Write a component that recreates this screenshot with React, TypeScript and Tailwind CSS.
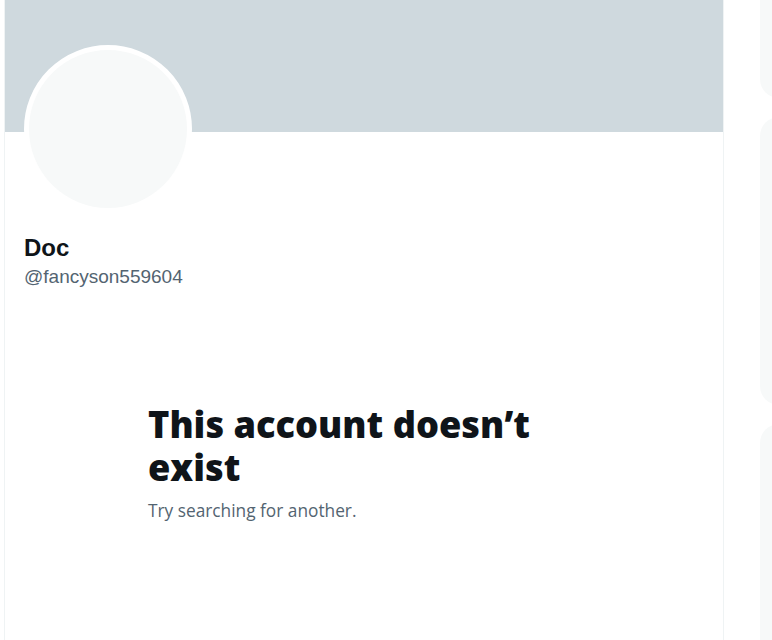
import React from "react";

export default function App() {
  return (
    <div className="flex h-[640px] w-[772px] overflow-hidden bg-white">
      <div className="w-[4px] shrink-0" />
      <main className="flex w-[720px] shrink-0 flex-col border-x border-[#eff3f4]">
        <div className="h-[132px] shrink-0 bg-[#cfd9de]" />
        <div className="px-[19px]">
          <div className="-mt-[87px] h-[168px] w-[168px] rounded-full border-[5px] border-white bg-[#f7f9f9]" />
          <div className="mt-[20px] font-['Liberation_Sans',Arial,sans-serif]">
            <div className="text-[24px] font-bold leading-[29px] text-[#0f1419]">Doc</div>
            <div className="mt-[3px] text-[19px] leading-[24px] text-[#536471]">@fancyson559604</div>
          </div>
        </div>
        <div className="mt-[114px] pl-[143px] font-['Open_Sans','Noto_Sans',sans-serif]">
          <h2 className="text-[36.2px] font-extrabold leading-[43px] text-[#0f1419]">
            This account doesn’t
            <br />
            exist
          </h2>
          <p className="mt-[10px] text-[17.3px] leading-[24px] text-[#536471]">Try searching for another.</p>
        </div>
      </main>
      <div className="w-[36px] shrink-0" />
      <aside className="flex w-[300px] shrink-0 flex-col gap-[19px]">
        <div className="-mt-[40px] h-[138px] shrink-0 rounded-[19px] bg-[#f7f9f9]" />
        <div className="h-[288px] shrink-0 rounded-[19px] bg-[#f7f9f9]" />
        <div className="h-[300px] shrink-0 rounded-[19px] bg-[#f7f9f9]" />
      </aside>
    </div>
  );
}
